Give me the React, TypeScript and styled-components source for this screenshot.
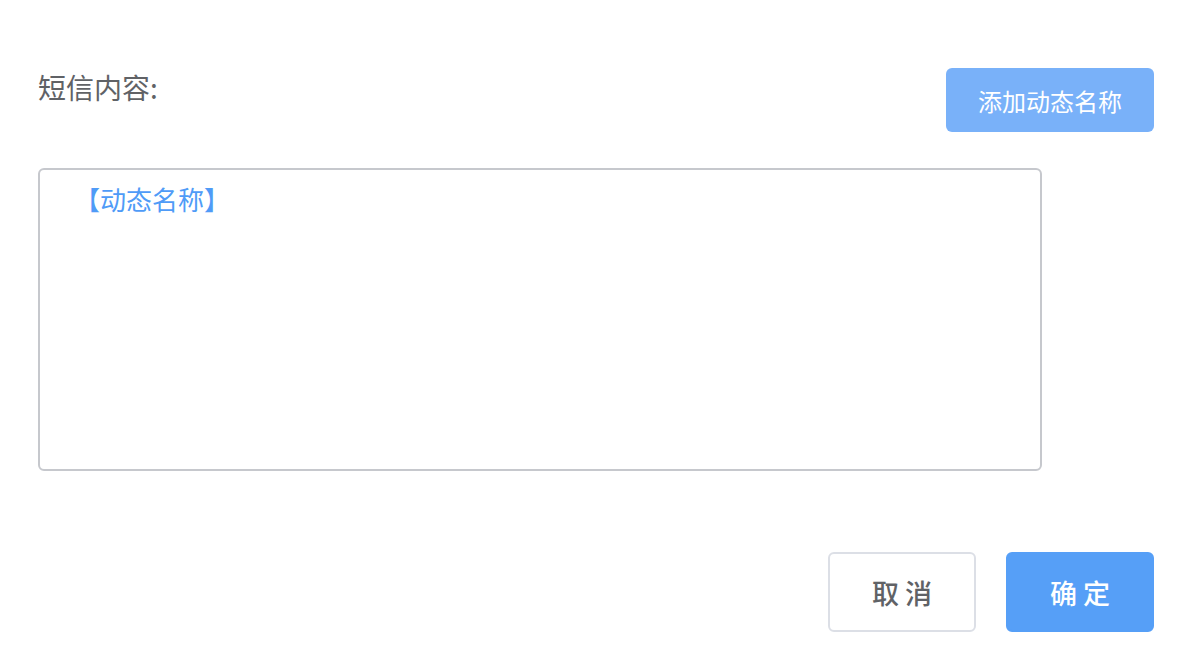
import React from "react";
import styled, { createGlobalStyle } from "styled-components";

const Global = createGlobalStyle`
  html, body { margin: 0; padding: 0; background: #ffffff; }
  body { font-family: "Noto Sans CJK SC", "Noto Sans", sans-serif; }
  * { box-sizing: border-box; }
`;

const Page = styled.div`
  width: 1192px;
  height: 672px;
  padding: 68px 38px 40px 38px;
  display: flex;
  flex-direction: column;
  background: #ffffff;
`;

const Header = styled.div`
  display: flex;
  justify-content: space-between;
  align-items: flex-start;
`;

const Label = styled.div`
  font-size: 28px;
  line-height: 40px;
  color: #606266;
  margin-top: -1px;
`;

const AddButton = styled.button`
  width: 208px;
  height: 64px;
  border: none;
  border-radius: 6px;
  background: #79b1f9;
  color: #ffffff;
  font-family: inherit;
  font-size: 24px;
  padding: 0;
`;

const Editor = styled.div`
  margin-top: 36px;
  width: 1004px;
  height: 303px;
  border: 2px solid #c6c8cd;
  border-radius: 6px;
  padding: 10px 0 0 34px;
`;

const Tag = styled.span`
  color: #4f9bf7;
  font-size: 26px;
  line-height: 38px;
`;

const Footer = styled.div`
  margin-top: auto;
  display: flex;
  justify-content: flex-end;
  gap: 30px;
`;

const DialogButton = styled.button<{ $primary?: boolean }>`
  width: 148px;
  height: 80px;
  border-radius: 6px;
  border: 2px solid ${(p) => (p.$primary ? "#569ff7" : "#dcdfe6")};
  background: ${(p) => (p.$primary ? "#569ff7" : "#ffffff")};
  color: ${(p) => (p.$primary ? "#ffffff" : "#606266")};
  font-family: inherit;
  font-size: 27px;
  font-weight: 500;
  padding: 0;
  white-space: pre;
`;

export default function App() {
  return (
    <>
      <Global />
      <Page>
        <Header>
          <Label>短信内容:</Label>
          <AddButton>添加动态名称</AddButton>
        </Header>
        <Editor>
          <Tag>【动态名称】</Tag>
        </Editor>
        <Footer>
          <DialogButton>取 消</DialogButton>
          <DialogButton $primary>确 定</DialogButton>
        </Footer>
      </Page>
    </>
  );
}
